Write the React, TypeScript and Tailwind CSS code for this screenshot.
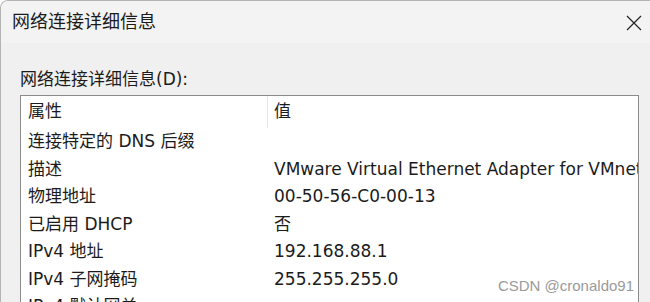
import React from "react";

const rows = [
  { name: "连接特定的 DNS 后缀", value: "" },
  { name: "描述", value: "VMware Virtual Ethernet Adapter for VMnet8" },
  { name: "物理地址", value: "00-50-56-C0-00-13" },
  { name: "已启用 DHCP", value: "否" },
  { name: "IPv4 地址", value: "192.168.88.1" },
  { name: "IPv4 子网掩码", value: "255.255.255.0" },
  { name: "IPv4 默认网关", value: "" },
];

const font = { fontFamily: '"DejaVu Sans", "Noto Sans CJK SC", sans-serif' };

const App = () => {
  return (
    <div
      className="relative w-[650px] h-[302px] overflow-hidden bg-[#f0f0f0] border-l border-t border-[#b4b4b4] rounded-tl-[8px] text-[#1b1b1b]"
      style={font}
    >
      <div className="flex h-[42px] items-center justify-between bg-[#f3f3f3] pl-[11px] pr-[8px]">
        <span className="text-[18px] leading-[24px]">网络连接详细信息</span>
        <svg width="16" height="16" viewBox="0 0 16 16" className="mt-[2px] text-[#222]">
          <path d="M1 1 L15 15 M15 1 L1 15" stroke="currentColor" strokeWidth="1.2" />
        </svg>
      </div>

      <div className="pl-[19px] pr-[11px] pt-[24px]">
        <div className="text-[17px] leading-[24px] mb-[4px]">网络连接详细信息(D):</div>

        <div className="border border-[#8c8c8c] bg-white h-[260px] overflow-hidden text-[17px]">
          <div className="flex h-[32px] items-center">
            <div className="w-[246px] pl-[7px]">属性</div>
            <div className="h-full w-px bg-[#e5e5e5]" />
            <div className="pl-[6px]">值</div>
          </div>
          {rows.map((r) => (
            <div key={r.name} className="flex h-[27.5px] items-center whitespace-nowrap">
              <div className="w-[247px] shrink-0 pl-[7px]">{r.name}</div>
              <div className="pl-[6px]">{r.value}</div>
            </div>
          ))}
        </div>
      </div>

      <div
        className="absolute right-[16px] bottom-[5px] text-[15px] text-[#9a9a9a]"
        style={{ fontFamily: '"Liberation Sans", Arial, sans-serif' }}
      >
        CSDN @cronaldo91
      </div>
    </div>
  );
};

export default App;
